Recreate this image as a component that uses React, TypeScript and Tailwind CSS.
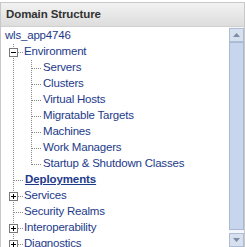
import React from 'react';

type Node = {
  label: string;
  level: 0 | 1;
  expander?: 'plus' | 'minus';
  last?: boolean;
  bold?: boolean;
};

const nodes: Node[] = [
  { label: 'Environment', level: 0, expander: 'minus' },
  { label: 'Servers', level: 1 },
  { label: 'Clusters', level: 1 },
  { label: 'Virtual Hosts', level: 1 },
  { label: 'Migratable Targets', level: 1 },
  { label: 'Machines', level: 1 },
  { label: 'Work Managers', level: 1 },
  { label: 'Startup & Shutdown Classes', level: 1, last: true },
  { label: 'Deployments', level: 0, bold: true },
  { label: 'Services', level: 0, expander: 'plus' },
  { label: 'Security Realms', level: 0 },
  { label: 'Interoperability', level: 0, expander: 'plus' },
  { label: 'Diagnostics', level: 0, expander: 'plus' },
];

const LINE = '#8a8a8a';

// connector drawing for one row of the tree
function Connector({ node }: { node: Node }) {
  const w = node.level === 0 ? (node.bold ? 24 : 23) : 42;
  return (
    <svg width={w} height={16} className="shrink-0" shapeRendering="crispEdges">
      {/* sibling line at level 0 */}
      <line x1={12.5} y1={0} x2={12.5} y2={16} stroke={LINE} strokeDasharray="1 1" />
      {node.level === 0 && !node.expander && (
        <line x1={13} y1={8.5} x2={w - 1} y2={8.5} stroke={LINE} strokeDasharray="1 1" />
      )}
      {node.level === 0 && node.expander && (
        <>
          <line x1={17} y1={8.5} x2={w - 1} y2={8.5} stroke={LINE} strokeDasharray="1 1" />
          <rect x={8.5} y={4.5} width={8} height={8} fill="#fff" stroke="#7a7a7a" />
          <line x1={10} y1={8.5} x2={15} y2={8.5} stroke="#000" />
          {node.expander === 'plus' && <line x1={12.5} y1={6} x2={12.5} y2={11} stroke="#000" />}
        </>
      )}
      {node.level === 0 && node.expander === 'minus' && (
        <line x1={30.5} y1={13} x2={30.5} y2={16} stroke={LINE} strokeDasharray="1 1" />
      )}
      {node.level === 1 && (
        <>
          <line x1={30.5} y1={0} x2={30.5} y2={node.last ? 9 : 16} stroke={LINE} strokeDasharray="1 1" />
          <line x1={31} y1={8.5} x2={41} y2={8.5} stroke={LINE} strokeDasharray="1 1" />
        </>
      )}
    </svg>
  );
}

export default function App() {
  return (
    <div className="w-[245px] h-[247px] overflow-hidden bg-white pt-[2px]" style={{ fontFamily: 'Tahoma, "Liberation Sans", Arial, sans-serif' }}>
      <div className="h-[245px] border-l border-t border-r border-[#c8c8c8] flex flex-col">
        {/* Header */}
        <div className="h-[24px] shrink-0 flex items-center pl-[5px] bg-gradient-to-b from-[#f2f2f2] to-[#dddddd] border-b border-[#d0d0d0]">
          <span className="text-[11.5px] font-bold text-[#333333] tracking-[-0.1px]">Domain Structure</span>
        </div>

        {/* Body */}
        <div className="flex-1 flex min-h-0">
          <div className="flex-1 overflow-hidden pt-[1px]">
            <div className="h-[16px] flex items-center pl-[4px]">
              <a className="text-[11.5px] tracking-[-0.2px] text-[#1d3a8a] leading-none">wls_app4746</a>
            </div>
            {nodes.map((n) => (
              <div key={n.label} className="h-[16px] flex items-center">
                <Connector node={n} />
                <a
                  className={
                    n.bold
                      ? 'text-[11.5px] tracking-[-0.1px] font-bold underline text-[#1d3a8a] leading-none whitespace-nowrap'
                      : 'text-[11.5px] tracking-[-0.2px] text-[#1d3a8a] leading-none whitespace-nowrap'
                  }
                >
                  {n.label}
                </a>
              </div>
            ))}
          </div>

          {/* Scrollbar */}
          <div className="w-[15px] shrink-0 flex flex-col pt-[1px] bg-[#f4f6fa]">
            <div className="h-[14px] shrink-0 flex items-center justify-center bg-[#d6e0ee] border border-[#aebdd4]">
              <svg width="7" height="4" viewBox="0 0 7 4">
                <path d="M0 4 L3.5 0 L7 4 Z" fill="#7d8ba3" />
              </svg>
            </div>
            <div className="flex-1 bg-[#c7d6ec] border border-[#a7b9d4] mb-[3px]" />
            <div className="h-[14px] shrink-0 flex items-center justify-center bg-[#d6e0ee] border border-[#aebdd4]">
              <svg width="7" height="4" viewBox="0 0 7 4">
                <path d="M0 0 L3.5 4 L7 0 Z" fill="#7d8ba3" />
              </svg>
            </div>
          </div>
        </div>
      </div>
    </div>
  );
}
